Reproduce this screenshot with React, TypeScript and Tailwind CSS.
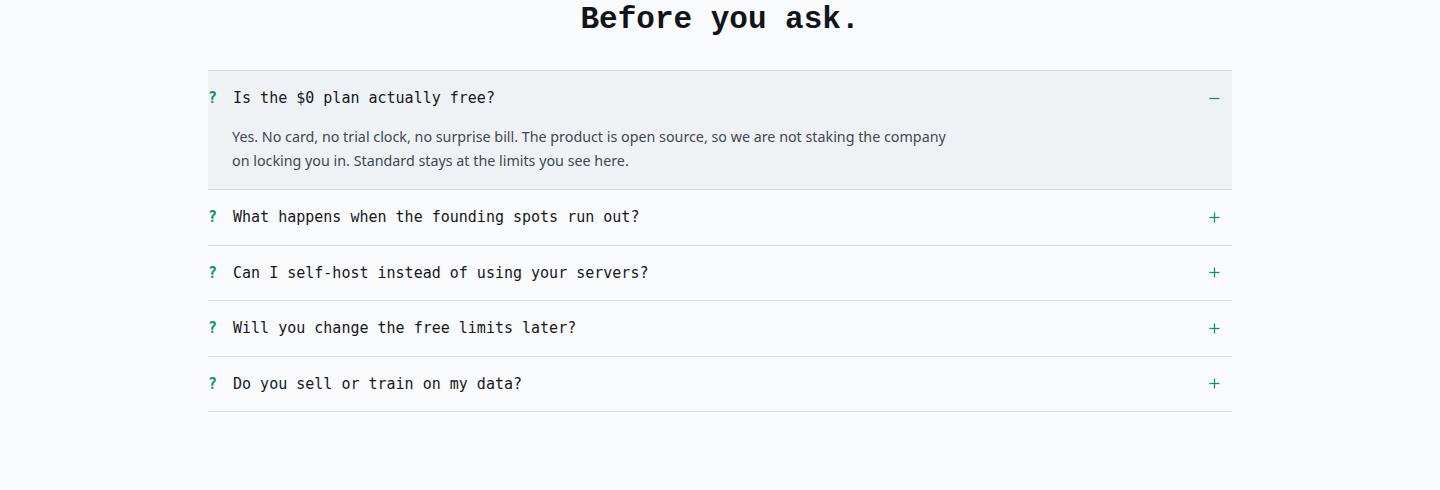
import { useState } from "react";

const faqs = [
  {
    q: "Is the $0 plan actually free?",
    a: "Yes. No card, no trial clock, no surprise bill. The product is open source, so we are not staking the company on locking you in. Standard stays at the limits you see here.",
  },
  {
    q: "What happens when the founding spots run out?",
    a: "Founding pricing closes for new accounts. Everyone who joined keeps their rate for as long as they stay.",
  },
  {
    q: "Can I self-host instead of using your servers?",
    a: "Yes. The full stack is open source and ships with a single compose file.",
  },
  {
    q: "Will you change the free limits later?",
    a: "Limits only go up. We will never lower what a plan includes after you sign up.",
  },
  {
    q: "Do you sell or train on my data?",
    a: "No. Your data is yours. We do not sell it and we do not train models on it.",
  },
];

const headingFont = "font-['Liberation_Mono',_'DejaVu_Sans_Mono',_monospace]";
const questionFont = "font-['DejaVu_Sans_Mono',_'Liberation_Mono',_monospace]";

function ToggleIcon({ open }: { open: boolean }) {
  return (
    <svg width="11" height="11" viewBox="0 0 11 11" className="text-[#0a9468]">
      <path d="M0.5 5.5h10" stroke="currentColor" strokeWidth="1.25" />
      {!open && <path d="M5.5 0.5v10" stroke="currentColor" strokeWidth="1.25" />}
    </svg>
  );
}

export default function App() {
  const [open, setOpen] = useState<number | null>(0);

  return (
    <div className="min-h-[490px] bg-[#f8fafc]">
      <div className="mx-auto max-w-5xl pt-[4px]">
        <h2
          className={`${headingFont} text-center text-[31px] font-bold leading-none text-[#111418] mb-[35px]`}
        >
          Before you ask.
        </h2>

        <div className="border-t border-[#d5d9dd]">
          {faqs.map((item, i) => {
            const isOpen = open === i;
            return (
              <div
                key={item.q}
                className={`border-b border-[#d5d9dd] ${isOpen ? "bg-[#eef2f5]" : ""}`}
              >
                <button
                  type="button"
                  onClick={() => setOpen(isOpen ? null : i)}
                  className={`${questionFont} flex w-full items-center gap-4 py-4 pr-3 text-left text-[15px] leading-[22.5px]`}
                >
                  <span className="font-bold text-[#0a9468]">?</span>
                  <span className="flex-1 text-[#15181c]">{item.q}</span>
                  <ToggleIcon open={isOpen} />
                </button>
                {isOpen && (
                  <p className="max-w-[740px] -mt-[0.5px] pb-4 pl-6 font-['Noto_Sans',_sans-serif] text-[14.3px] leading-6 text-[#41474f]">
                    {item.a}
                  </p>
                )}
              </div>
            );
          })}
        </div>
      </div>
    </div>
  );
}
